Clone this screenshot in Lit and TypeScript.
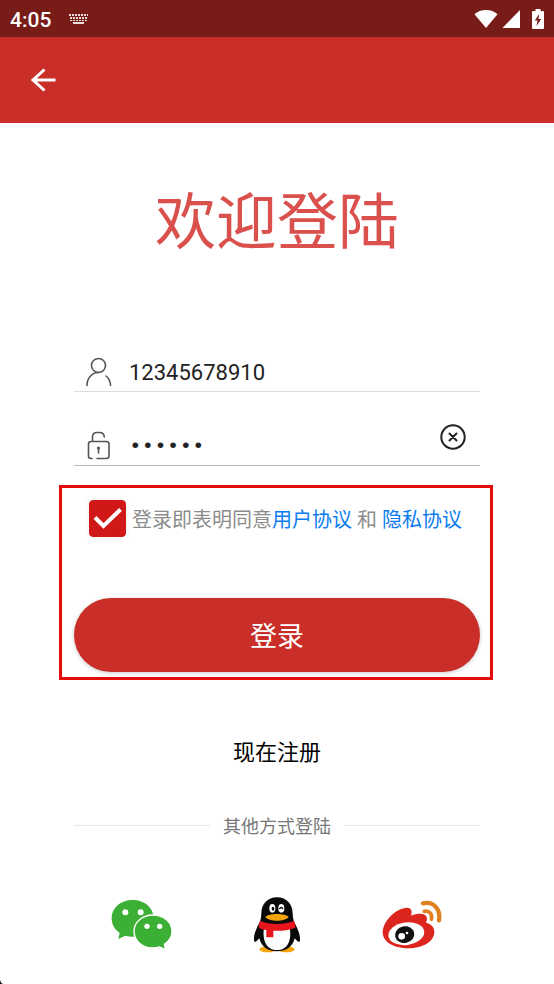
import { LitElement, html, css } from "lit";
import { customElement, state } from "lit/decorators.js";

@customElement("status-bar")
class StatusBar extends LitElement {
  static styles = css`
    :host {
      display: flex;
      align-items: center;
      height: 37px;
      padding: 0 10px;
      background: #781c18;
      color: #fff;
    }
    .time {
      padding-top: 2px;
      font-size: 21px;
      font-weight: 500;
      line-height: 24px;
    }
    .keyboard {
      margin-left: 18px;
    }
    .system {
      display: flex;
      align-items: center;
      margin-left: auto;
    }
    .signal {
      margin: 0 12px 0 4px;
    }
    svg {
      display: block;
      fill: #fff;
    }
  `;

  render() {
    return html`
      <span class="time">4:05</span>
      <svg class="keyboard" width="20" height="12" viewBox="0 0 20 12" aria-hidden="true">
        <path
          d="M0 1h2v2H0zM3 1h2v2H3zM6 1h2v2H6zM9 1h2v2H9zM12 1h2v2h-2zM15 1h2v2h-2zM18 1h1v2h-1zM1 4h2v2H1zM4 4h2v2H4zM7 4h2v2H7zM10 4h2v2h-2zM13 4h2v2h-2zM16 4h2v2h-2zM1 7h2v1H1zM4 7h2v1H4zM7 7h2v1H7zM10 7h2v1h-2zM13 7h2v1h-2zM16 7h2v1h-2zM4 9h11v2H4z"
          opacity=".85"
        />
      </svg>
      <span class="system">
        <svg width="24" height="20" viewBox="0 0 24 20" aria-hidden="true">
          <path d="M12 19 .5 5.200C3.500 2.600 7.500 1 12 1s8.500 1.600 11.500 4.200z" />
        </svg>
        <svg class="signal" width="18" height="20" viewBox="0 0 18 20" aria-hidden="true">
          <path d="M18 1v18H.5z" />
        </svg>
        <svg width="12" height="22" viewBox="0 0 12 22" aria-hidden="true">
          <path d="M3.500 1h5v2H11q1 0 1 1v16q0 1-1 1H1q-1 0-1-1V4q0-1 1-1h2.500z" />
          <path fill="#781c18" d="M7.200 6 2.800 12.600h2.700L4.600 18 9.200 11H6.500z" />
        </svg>
      </span>
    `;
  }
}

@customElement("social-logins")
class SocialLogins extends LitElement {
  static styles = css`
    :host {
      display: grid;
      grid-template-columns: repeat(3, 1fr);
      justify-items: center;
    }
    button {
      display: block;
      padding: 0;
      border: 0;
      background: none;
      cursor: pointer;
    }
    svg {
      display: block;
    }
  `;

  render() {
    return html`
      <button type="button" aria-label="微信">
        <svg width="64" height="60" viewBox="30 26 192 180">
          <path
            fill="#3cb034"
            d="M98 41c-36 0-63 24-63 55 0 19 9 34 24 44l-4 18 21-10c7 2 14 3 22 3 36 0 63-24 63-55S134 41 98 41z"
          />
          <path
            fill="#3cb034"
            stroke="#fff"
            stroke-width="4"
            d="M159 86c-32 0-57 21-57 49s25 50 57 50c7 0 13-1 19-3l19 8-4-16c14-9 23-23 23-39 0-28-25-49-57-49z"
          />
          <g fill="#fff">
            <circle cx="76" cy="78" r="9" />
            <circle cx="122" cy="78" r="9" />
            <circle cx="141" cy="120" r="8" />
            <circle cx="179" cy="120" r="8" />
          </g>
        </svg>
      </button>
      <button type="button" aria-label="QQ">
        <svg width="64" height="60" viewBox="15 26 192 180">
          <ellipse cx="83" cy="189" rx="25" ry="9" fill="#f5a50a" />
          <ellipse cx="139" cy="189" rx="25" ry="9" fill="#f5a50a" />
          <path
            fill="#090909"
            d="M111 33c-29 0-47 21-47 48 0 8-1 15-3 22-9 19-20 39-19 55 0 12 4 12 16-2 5 23 24 39 53 39s48-16 53-39c12 14 16 14 16 2 1-16-10-36-19-55-2-7-3-14-3-22 0-27-18-48-47-48z"
          />
          <path fill="#fff" d="M72 124c-6 39 8 67 39 67s45-28 38-67z" />
          <ellipse cx="97" cy="66" rx="9" ry="13" fill="#fff" />
          <ellipse cx="124" cy="66" rx="9" ry="13" fill="#fff" />
          <ellipse cx="99" cy="67" rx="4" ry="6" fill="#090909" />
          <path d="M118 68q6-9 11 0" fill="none" stroke="#090909" stroke-width="4" />
          <path fill="#f5a50a" d="M76 92c8-12 62-12 70 0-12 15-58 15-70 0z" />
          <path
            fill="#e8151c"
            d="M61 104c28 12 72 12 100 0 5 6 6 13 5 20-20 8-43 10-66 9v20H79v-22c-8-1-16-3-22-6-1-8 0-15 4-21z"
          />
        </svg>
      </button>
      <button type="button" aria-label="微博">
        <svg width="64" height="60" viewBox="31 26 192 180">
          <path
            fill="#dc251d"
            d="M106 65c17-3 24 8 18 23 21-8 42-8 47 4 2 6 0 11-2 17 16 4 25 13 25 28 0 28-34 49-78 49-45 0-77-20-77-48 0-31 35-68 67-73z"
          />
          <ellipse cx="110" cy="142" rx="54" ry="34" fill="#fff" transform="rotate(-8 110 142)" />
          <ellipse cx="105" cy="145" rx="29" ry="25" fill="#111" transform="rotate(-12 105 145)" />
          <circle cx="96" cy="150" r="10" fill="#fff" />
          <circle cx="112" cy="140" r="4" fill="#fff" />
          <g fill="none" stroke="#e08020" stroke-linecap="round">
            <path stroke-width="13" d="M160 51c32-8 54 19 48 51" />
            <path stroke-width="11" d="M164 75c16-3 25 9 21 24" />
          </g>
        </svg>
      </button>
    `;
  }
}

@customElement("app-root")
class AppRoot extends LitElement {
  static styles = css`
    :host {
      display: block;
      position: relative;
      box-sizing: border-box;
      min-height: 100vh;
      background: #fff;
      color: #222;
      font-family: Roboto, "Noto Sans CJK SC", sans-serif;
    }
    * {
      box-sizing: border-box;
    }
    svg {
      display: block;
      flex: none;
    }
    button,
    input {
      margin: 0;
      font: inherit;
      color: inherit;
    }
    button {
      padding: 0;
      border: 0;
      background: none;
      cursor: pointer;
    }
    a {
      text-decoration: none;
    }
    .toolbar {
      display: flex;
      align-items: center;
      height: 86px;
      padding: 0 28px;
      background: #c92f28;
    }
    .page {
      padding: 54px 59px 28px;
    }
    .title {
      margin: 0 0 49px;
      color: #d9504c;
      font-size: 61px;
      font-weight: 400;
      line-height: 92px;
      text-align: center;
    }
    .field {
      display: flex;
      align-items: flex-end;
      gap: 16px;
      height: 74px;
      margin: 0 15px;
      padding: 0 0 4px 11px;
      border-bottom: 1px solid #ddd;
    }
    .field.active {
      border-color: #bbb;
    }
    .field input {
      flex: 1;
      min-width: 0;
      height: 30px;
      padding: 0;
      border: 0;
      outline: 0;
      background: none;
      font-size: 22px;
    }
    .field input[type="password"] {
      font-family: "Liberation Mono", monospace;
      font-size: 21px;
    }
    .clear {
      display: flex;
      align-items: center;
      height: 48px;
      padding-right: 14px;
    }
    .line {
      fill: none;
      stroke: #555;
      stroke-width: 1.6;
      stroke-linecap: round;
    }
    .confirm {
      margin: 19px 2px 54px 0;
      padding: 12px 10px 5px 12px;
      border: 3px solid #e60c0c;
    }
    .agreement {
      display: flex;
      align-items: center;
      gap: 6px;
      margin-bottom: 61px;
      padding-left: 15px;
      color: #8c8c8c;
      font-size: 20px;
      line-height: 37px;
      white-space: nowrap;
    }
    .agreement a {
      color: #0a7cf0;
    }
    .terms {
      height: 37px;
      padding-top: 2px;
      line-height: 35px;
      padding-top: 3px;
    }
    .tick {
      display: grid;
      width: 37px;
      height: 37px;
      flex: none;
    }
    .tick > * {
      grid-area: 1 / 1;
    }
    .tick input {
      appearance: none;
      width: 37px;
      height: 37px;
      border: 1px solid #999;
      border-radius: 4px;
      background: #fff;
      box-shadow: 0 0 6px #f1eaea;
    }
    .tick input:checked {
      border-color: #d01818;
      background: #d01818;
    }
    .tick svg {
      pointer-events: none;
    }
    .submit {
      display: block;
      width: 100%;
      height: 74px;
      padding-bottom: 2px;
      border-radius: 37px;
      background: #c92f28;
      box-shadow: 0 1px 4px #ccc;
      color: #fff;
      font-size: 27px;
    }
    .register {
      display: block;
      width: fit-content;
      margin: 0 auto;
      padding: 3px 0 41px;
      color: #000;
      font-size: 22px;
      line-height: 32px;
    }
    .others {
      display: flex;
      align-items: center;
      gap: 13px;
      margin: 0 15px 54px;
      color: #777;
      font-size: 18px;
      line-height: 28px;
    }
    .others span {
      padding-top: 3px;
    }
    .others::before,
    .others::after {
      content: "";
      flex: 1;
      height: 1px;
      background: #e8e8e8;
    }
    social-logins {
      margin: 0 15px;
    }
    .corner {
      position: absolute;
      left: 0;
      bottom: 0;
    }
  `;

  @state() private agreed = true;
  @state() private password = "123456";

  render() {
    return html`
      <status-bar></status-bar>
      <header class="toolbar">
        <button type="button" aria-label="返回">
          <svg width="30" height="30" viewBox="0 0 30 30" fill="none" stroke="#fff" stroke-width="3">
            <path d="M27.500 15H5M16.500 4.500 5 15l11.500 10.500" />
          </svg>
        </button>
      </header>
      <main class="page">
        <h1 class="title">欢迎登陆</h1>
        <form @submit=${(e: Event) => e.preventDefault()}>
          <div class="field">
            <svg class="line" width="28" height="30" viewBox="0 0 28 30" aria-hidden="true">
              <circle cx="13.500" cy="8.500" r="7" />
              <path d="M2 28.500C2 21 7 15.500 13.500 15.500M21 19c3 2.500 4.500 6 4.500 9.500" />
            </svg>
            <input type="text" aria-label="账号" .value=${"12345678910"} />
          </div>
          <div class="field active">
            <svg class="line" width="28" height="30" viewBox="0 0 28 30" aria-hidden="true">
              <path
                d="M7.500 10.500V6q0-4.500 4.500-4.500h2.500q4.500 0 4.800 4.500M7 27.500H6q-2.500 0-2.500-2.500V13q0-2.500 2.500-2.500h15.500q2.500 0 2.500 2.500v12q0 2.500-2.500 2.500H12M13.500 17v5"
              />
              <circle cx="13.500" cy="17" r=".8" />
            </svg>
            <input
              type="password"
              aria-label="密码"
              .value=${this.password}
              @input=${(e: Event) => (this.password = (e.target as HTMLInputElement).value)}
            />
            <button class="clear" type="button" aria-label="清除" @click=${() => (this.password = "")}>
              <svg width="26" height="26" viewBox="0 0 26 26" fill="none" stroke="#222" stroke-width="2">
                <circle cx="13" cy="13" r="11.700" />
                <path d="m9.500 9.500 7 7m0-7-7 7" stroke-linecap="round" />
              </svg>
            </button>
          </div>
          <section class="confirm">
            <div class="agreement">
              <span class="tick">
                <input
                  id="agree"
                  type="checkbox"
                  .checked=${this.agreed}
                  @change=${(e: Event) => (this.agreed = (e.target as HTMLInputElement).checked)}
                />
                <svg width="37" height="37" viewBox="0 0 37 37" fill="none" stroke="#fff" stroke-width="4">
                  <path d="m6 17.500 8.500 8.500L31.500 9.500" />
                </svg>
              </span>
              <span class="terms"
                ><label for="agree">登录即表明同意</label><a href="#terms">用户协议</a> 和
                <a href="#privacy">隐私协议</a></span
              >
            </div>
            <button class="submit" type="submit">登录</button>
          </section>
        </form>
        <a class="register" href="#register">现在注册</a>
        <div class="others"><span>其他方式登陆</span></div>
        <social-logins></social-logins>
      </main>
      <svg class="corner" width="3" height="4" viewBox="0 0 3 4" aria-hidden="true">
        <path d="M0 0q.500 3 3 4H0z" fill="#111" />
      </svg>
    `;
  }
}
